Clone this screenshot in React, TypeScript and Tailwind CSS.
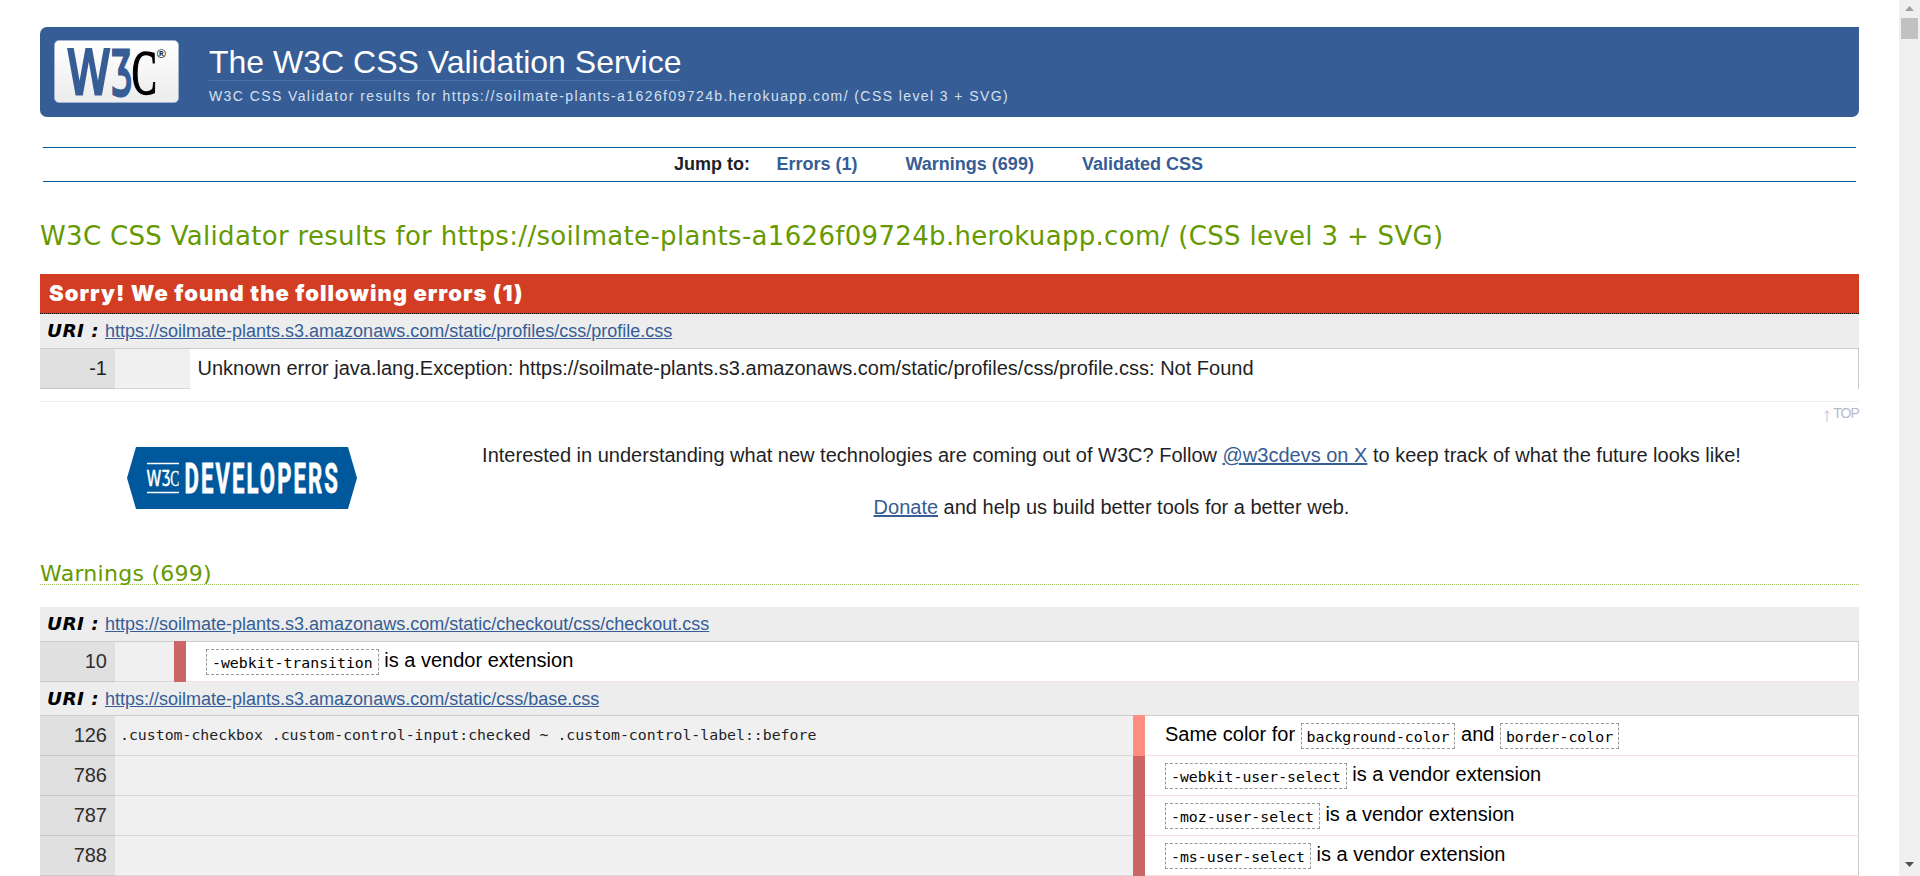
import type { ReactNode } from 'react';

function W3CLogo() {
  return (
    <svg className="block h-[63px] w-[125px] overflow-visible" viewBox="0 0 125 63" role="img" aria-label="W3C">
      <defs>
        <linearGradient id="plate" x1="0" y1="0" x2="0" y2="1">
          <stop offset="0" stopColor="#ffffff" />
          <stop offset="1" stopColor="#ececec" />
        </linearGradient>
      </defs>
      <rect x="0.5" y="0.5" width="124" height="62" rx="4.5" fill="url(#plate)" stroke="#a9bbd6" strokeWidth="0.6" />
      <g fill="#365d95" stroke="#365d95">
        <text x="13" y="53.8" fontFamily="DejaVu Sans" fontSize="60" strokeWidth="3" textLength="43.5" lengthAdjust="spacingAndGlyphs">W</text>
        <text x="56.2" y="53.8" fontFamily="DejaVu Sans" fontSize="60" strokeWidth="3" textLength="21.5" lengthAdjust="spacingAndGlyphs">Ʒ</text>
      </g>
      <text x="77.8" y="53.8" fontFamily="Liberation Serif" fontSize="64" fill="#000" stroke="#000" strokeWidth="1.6" textLength="25" lengthAdjust="spacingAndGlyphs">C</text>
      <text x="102.8" y="18" fontFamily="Liberation Sans" fontWeight="bold" fontSize="12.5" fill="#222">®</text>
    </svg>
  );
}

function DevelopersLogo() {
  return (
    <svg className="block h-[62px] w-[230px] overflow-visible" viewBox="0 0 230 62" role="img" aria-label="W3C Developers">
      <path d="M9 0H221L230 31L221 62H9L0 31Z" fill="#00589c" />
      <path d="M20 16.5H52M20 45.5H52" stroke="#fff" strokeWidth="1.6" />
      <g fill="#fff" stroke="#fff">
        <text x="19.5" y="39" fontFamily="DejaVu Sans" fontSize="22" strokeWidth="0.6" textLength="14.8" lengthAdjust="spacingAndGlyphs">W</text>
        <text x="34.4" y="39" fontFamily="DejaVu Sans" fontSize="22" strokeWidth="0.6" textLength="8.7" lengthAdjust="spacingAndGlyphs">Ʒ</text>
        <text x="43.2" y="39" fontFamily="Liberation Serif" fontSize="23" strokeWidth="0.3" textLength="9" lengthAdjust="spacingAndGlyphs">C</text>
        <text x="57.5" y="46" fontFamily="Roboto" fontWeight="bold" fontSize="42.5" strokeWidth="0.8" textLength="155.5" lengthAdjust="spacingAndGlyphs" letterSpacing="4">DEVELOPERS</text>
      </g>
    </svg>
  );
}

function Code({ children }: { children: string }) {
  return (
    <code className="inline-block h-[26px] border border-dashed border-[#999] px-[5px] align-[-0.5px] font-['DejaVu_Sans_Mono',monospace] text-[14.83px] leading-[26px] text-black">
      {children}
    </code>
  );
}

function UriRow({ href }: { href: string }) {
  return (
    <div className="flex h-[34px] items-center bg-[#ededed] pl-[7px] leading-[34px]">
      <span className="w-[58px] font-['DejaVu_Sans',sans-serif] text-[18.5px] font-bold tracking-[0.4px] text-black italic">URI :</span>
      <a className="text-[18px] text-[#365d95] underline" href="#">{href}</a>
    </div>
  );
}

type WarningProps = { line: number; context?: string; color: string; first?: boolean; contextWidth: string; children: ReactNode };

function WarningRow({ line, context, color, first, contextWidth, children }: WarningProps) {
  return (
    <div className={`flex ${first ? 'h-[41px] border-t border-[#ccc]' : 'h-10'}`}>
      <div className="h-10 w-[75px] border-b border-[#c8c8c8] bg-[#e0e0e0] pr-2 text-right leading-[38px] text-[#2e2e2e]">{line}</div>
      <div className={`${contextWidth} h-10 border-b border-[#d9d9d9] bg-[#f0f0f0] pl-[5px] font-['DejaVu_Sans_Mono',monospace] text-[14.83px] leading-[37px]`}>{context}</div>
      <div className={`w-3 ${color} ${first ? '-mt-px h-[41px]' : 'h-10'}`} />
      <div className="h-10 flex-1 border-r border-b border-r-[#ccc] border-b-[#fadddd] pl-5 leading-[37px] text-black">{children}</div>
    </div>
  );
}

const navLinks = ['Errors (1)', 'Warnings (699)', 'Validated CSS'];
const subject = 'W3C CSS Validator results for https://soilmate-plants-a1626f09724b.herokuapp.com/ (CSS level 3 + SVG)';

export default function App() {
  return (
    <div className="flex h-[876px] w-[1920px] overflow-hidden bg-white font-['Liberation_Sans',Arial,sans-serif] text-[20px] whitespace-nowrap text-[#1f1f26]">
      <main className="h-[876px] w-[1899px] overflow-hidden pt-[27px] pr-10 pl-10">
        <header className="flex h-[90px] rounded-l-[7px] rounded-br-[7px] bg-[#365d95] pt-[13px] pl-[13.5px]">
          <W3CLogo />
          <div className="ml-[30.5px] flex flex-col items-start pt-[3px]">
            <h1 className="h-[38px] border-b border-[#4b70a5] text-[32px] leading-[39px] text-white">The W3C CSS Validation Service</h1>
            <p className="mt-[5px] text-[14px] leading-5 tracking-[1.41px] text-[#d5e0f0]">{subject}</p>
          </div>
        </header>

        <nav className="mx-[3px] mt-[30px] flex h-[35px] border-y border-[#005a9c] pl-[631px] text-[18px] leading-[32px] font-bold">
          <span className="w-[102.5px]">Jump to:</span>
          <div className="flex gap-12 text-[#365d95]">
            {navLinks.map((label) => (
              <a key={label} href="#">{label}</a>
            ))}
          </div>
        </nav>

        <h2 className="mt-[34px] h-10 font-['DejaVu_Sans',sans-serif] text-[26px] leading-10 tracking-[0.32px] text-[#690]">{subject}</h2>

        <section className="mt-[18px]">
          <h3 className="h-10 border-b border-dotted border-black bg-[#d23d24] pl-[9px] font-['Inter',sans-serif] text-[22px] leading-[39px] font-black tracking-[1.02px] text-white">
            Sorry! We found the following errors (1)
          </h3>
          <UriRow href="https://soilmate-plants.s3.amazonaws.com/static/profiles/css/profile.css" />
          <div className="flex h-[41px] border-t border-[#ccc] leading-[39px]">
            <div className="w-[75px] border-b border-[#c8c8c8] bg-[#e0e0e0] pr-2 text-right">-1</div>
            <div className="w-[75px] border-b border-[#d9d9d9] bg-[#f0f0f0]" />
            <div className="flex-1 border-r border-[#ccc] pl-[7.5px]">
              Unknown error java.lang.Exception: https://soilmate-plants.s3.amazonaws.com/static/profiles/css/profile.css: Not Found
            </div>
          </div>
        </section>

        <div className="mt-3 flex h-[25px] justify-end gap-[3px] border-t border-[#eeeef5] text-[14px] leading-[22px] tracking-[-0.9px] text-[#b9b9cc]">
          <svg className="mt-2 h-3 w-[6px]" viewBox="0 0 6 12" fill="none" stroke="currentColor" strokeWidth="0.9">
            <path d="M3 12V1M0.5 3.5L3 0.8L5.5 3.5" />
          </svg>
          <span>TOP</span>
        </div>

        <section className="flex h-[136px]">
          <div className="w-[324px] pt-[21px] pl-[87px]">
            <DevelopersLogo />
          </div>
          <div className="flex flex-1 flex-col items-center pt-4 text-center leading-[27px]">
            <p>
              Interested in understanding what new technologies are coming out of W3C? Follow <a className="text-[#365d95] underline" href="#">@w3cdevs on X</a> to keep track of what the future looks like!
            </p>
            <p className="mt-[25px]">
              <a className="text-[#365d95] underline" href="#">Donate</a> and help us build better tools for a better web.
            </p>
          </div>
        </section>

        <h3 className="h-[23px] border-b border-dotted border-[#9dbb5b] font-['DejaVu_Sans',sans-serif] text-[22px] leading-[23px] tracking-[0.28px] text-[#690]">Warnings (699)</h3>

        <section className="mt-[22px]">
          <UriRow href="https://soilmate-plants.s3.amazonaws.com/static/checkout/css/checkout.css" />
          <WarningRow line={10} color="bg-[#cc6666]" contextWidth="w-[59px]" first>
            <Code>-webkit-transition</Code> is a vendor extension
          </WarningRow>
          <div className="h-[33px] overflow-hidden">
            <UriRow href="https://soilmate-plants.s3.amazonaws.com/static/css/base.css" />
          </div>
          <WarningRow line={126} color="bg-[#fc8f82]" contextWidth="w-[1018px]" context=".custom-checkbox .custom-control-input:checked ~ .custom-control-label::before" first>
            Same color for <Code>background-color</Code> and <Code>border-color</Code>
          </WarningRow>
          <WarningRow line={786} color="bg-[#cc6666]" contextWidth="w-[1018px]">
            <Code>-webkit-user-select</Code> is a vendor extension
          </WarningRow>
          <WarningRow line={787} color="bg-[#cc6666]" contextWidth="w-[1018px]">
            <Code>-moz-user-select</Code> is a vendor extension
          </WarningRow>
          <WarningRow line={788} color="bg-[#cc6666]" contextWidth="w-[1018px]">
            <Code>-ms-user-select</Code> is a vendor extension
          </WarningRow>
        </section>
      </main>

      <aside className="flex h-[876px] w-[21px] flex-col items-center bg-[#f0f0f0]">
        <svg className="mt-[6px] h-[5px] w-[9px]" viewBox="0 0 9 5"><path d="M0 5L4.5 0L9 5Z" fill="#a0a0a0" /></svg>
        <div className="mt-[7px] h-[21px] w-[17px] bg-[#c1c1c1]" />
        <svg className="mt-auto mb-[9px] h-[5px] w-[9px]" viewBox="0 0 9 5"><path d="M0 0L4.5 5L9 0Z" fill="#505050" /></svg>
      </aside>
    </div>
  );
}
